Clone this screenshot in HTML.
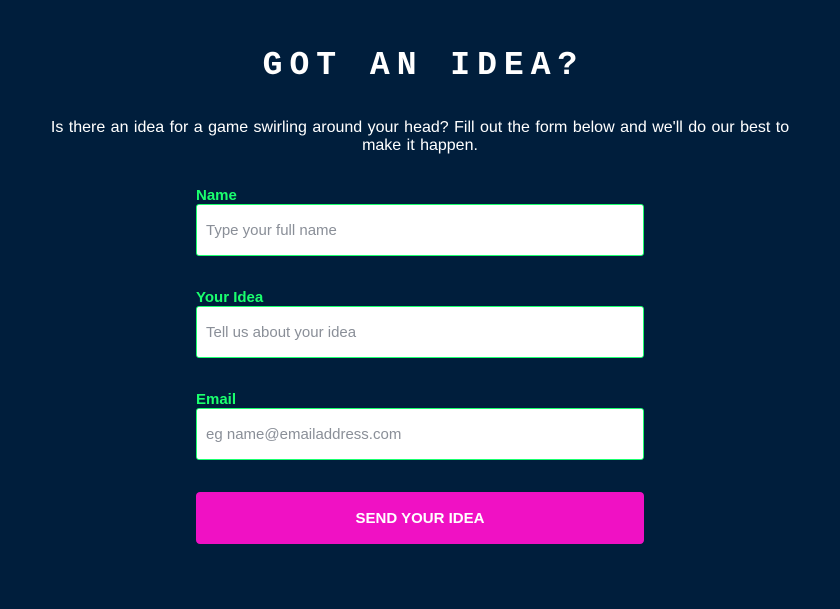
<!DOCTYPE html>
<html><head><style>
body{margin:0;width:840px;height:609px;background:#001e3c;font-family:"Liberation Sans",sans-serif;overflow:hidden}
h1{position:absolute;top:46px;left:0;width:840px;text-align:center;margin:0;color:#fff;font-family:"Liberation Mono",monospace;font-weight:bold;font-size:33px;letter-spacing:7px;line-height:40px;padding-left:7px;box-sizing:border-box}
p{position:absolute;top:119px;left:45px;width:750px;margin:0;text-align:center;color:#fff;font-size:16px;word-spacing:1px;line-height:18px}
label{position:absolute;left:196px;color:#1aff6e;font-weight:bold;font-size:15px;line-height:18px}
.in{position:absolute;left:196px;height:52px;width:448px;box-sizing:border-box;background:#fff;border:1.5px solid #1aff6e;border-radius:3px;color:#8a8f98;font-size:15px;line-height:52px;padding-left:9px}
.btn{position:absolute;left:196px;top:492px;width:448px;height:52px;background:#f011c4;border-radius:4px;color:#fff;font-weight:bold;font-size:15px;text-align:center;line-height:54px}
</style></head><body>
<h1>GOT AN IDEA?</h1>
<p>Is there an idea for a game swirling around your head? Fill out the form below and we'll do our best to make it happen.</p>
<label style="top:187px">Name</label>
<div class="in" style="top:204px">Type your full name</div>
<label style="top:289px">Your Idea</label>
<div class="in" style="top:306px">Tell us about your idea</div>
<label style="top:391px">Email</label>
<div class="in" style="top:408px">eg name@emailaddress.com</div>
<div class="btn">SEND YOUR IDEA</div>
</body></html>
